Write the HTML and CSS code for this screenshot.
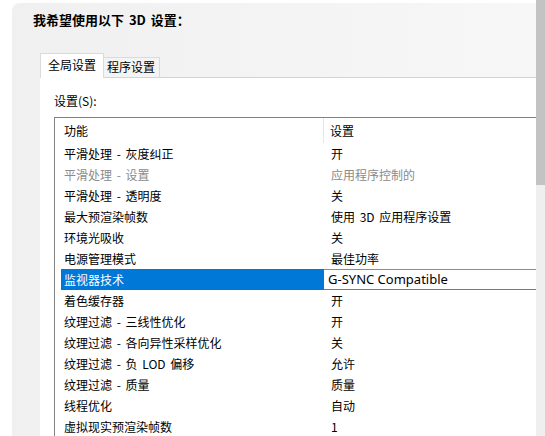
FILE: index.html
```html
<!DOCTYPE html>
<html lang="zh-CN">
<head>
<meta charset="utf-8">
<title>3D 设置</title>
<link rel="stylesheet" href="styles.css">
</head>
<body>
<div class="page">
  <div class="main">
    <div class="panel">
      <h1 class="title">我希望使用以下 3D 设置：</h1>
      <div class="tabs">
        <div class="tab active">全局设置</div>
        <div class="tab">程序设置</div>
      </div>
      <div class="tabpanel">
        <div class="label">设置(S):</div>
        <div class="list">
          <div class="row header"><span class="c1">功能</span><span class="c2">设置</span></div>
          <div class="row"><span class="c1">平滑处理 - 灰度纠正</span><span class="c2">开</span></div>
          <div class="row disabled"><span class="c1">平滑处理 - 设置</span><span class="c2">应用程序控制的</span></div>
          <div class="row"><span class="c1">平滑处理 - 透明度</span><span class="c2">关</span></div>
          <div class="row"><span class="c1">最大预渲染帧数</span><span class="c2">使用 3D 应用程序设置</span></div>
          <div class="row"><span class="c1">环境光吸收</span><span class="c2">关</span></div>
          <div class="row"><span class="c1">电源管理模式</span><span class="c2">最佳功率</span></div>
          <div class="row selected"><span class="c1">监视器技术</span><span class="c2">G-SYNC Compatible</span></div>
          <div class="row"><span class="c1">着色缓存器</span><span class="c2">开</span></div>
          <div class="row"><span class="c1">纹理过滤 - 三线性优化</span><span class="c2">开</span></div>
          <div class="row"><span class="c1">纹理过滤 - 各向异性采样优化</span><span class="c2">关</span></div>
          <div class="row"><span class="c1">纹理过滤 - 负 LOD 偏移</span><span class="c2">允许</span></div>
          <div class="row"><span class="c1">纹理过滤 - 质量</span><span class="c2">质量</span></div>
          <div class="row"><span class="c1">线程优化</span><span class="c2">自动</span></div>
          <div class="row"><span class="c1">虚拟现实预渲染帧数</span><span class="c2">1</span></div>
        </div>
      </div>
    </div>
  </div>
  <div class="scrollbar"><div class="thumb"></div></div>
</div>
</body>
</html>
```

FILE: styles.css
```css
html, body {
  margin: 0;
  padding: 0;
  background: #ffffff;
}

body {
  font-family: "Noto Sans CJK SC", "Noto Sans", sans-serif;
  font-size: 12px;
  color: #000;
  word-spacing: 2px;
}

.page {
  display: flex;
  width: 545px;
  height: 436px;
  overflow: hidden;
}

.main {
  flex: 1;
  min-width: 0;
  padding: 3px 0 0 12px;
  background: #ffffff;
  display: flex;
  flex-direction: column;
}

.panel {
  flex: 1;
  background: linear-gradient(to right, #f0f0f0, #f7f7f7);
  border-radius: 8px 0 0 0;
  display: flex;
  flex-direction: column;
}

.title {
  margin: 0;
  padding: 7px 0 0 21px;
  font-size: 13px;
  font-weight: 700;
  line-height: 20px;
}

.tabs {
  margin: 23px 0 0 28px;
  height: 24px;
  display: flex;
  align-items: flex-end;
  border-bottom: 1px solid #d4d4d4;
}

.tab {
  box-sizing: border-box;
  height: 20px;
  line-height: 18px;
  padding: 0 4px 0 3px;
  border: 1px solid #dadada;
  border-bottom: none;
  border-left: none;
  background: #f4f4f4;
}

.tab.active {
  height: 25px;
  line-height: 21px;
  padding: 0 7px;
  margin-bottom: -1px;
  border-left: 1px solid #dadada;
  background: #ffffff;
}

.tabpanel {
  flex: 1;
  margin-left: 28px;
  background: #ffffff;
  padding-top: 15px;
}

.label {
  padding-left: 14px;
  line-height: 16px;
}

.list {
  margin: 8px 0 0 14px;
  border-top: 1px solid #828282;
  border-left: 1px solid #828282;
  background: #ffffff;
  padding-left: 6px;
}

.row {
  display: flex;
  height: 21px;
  line-height: 21px;
  white-space: nowrap;
}

.row.header {
  height: 25px;
  line-height: 25px;
}

.c1 {
  box-sizing: border-box;
  flex: 0 0 263px;
  padding-left: 3px;
}

.c2 {
  flex: 1;
  padding-left: 7px;
}

.header .c1 {
  border-right: 1px solid #e6e6e6;
}

.header .c2 {
  padding-left: 6px;
}

.disabled {
  color: #8a8a8a;
}

.selected .c1 {
  background: #0078d7;
  color: #ffffff;
}

.selected .c2 {
  font-family: "Noto Sans", sans-serif;
  font-size: 13px;
  line-height: 19px;
  padding-left: 4px;
  word-spacing: 0;
  border-top: 1px solid #8c8c8c;
  border-bottom: 1px solid #7a7a7a;
  background: #ffffff;
}

.scrollbar {
  flex: 0 0 9px;
  background: #efefef;
}

.thumb {
  height: 185px;
  background: #c3c3c3;
}
```
